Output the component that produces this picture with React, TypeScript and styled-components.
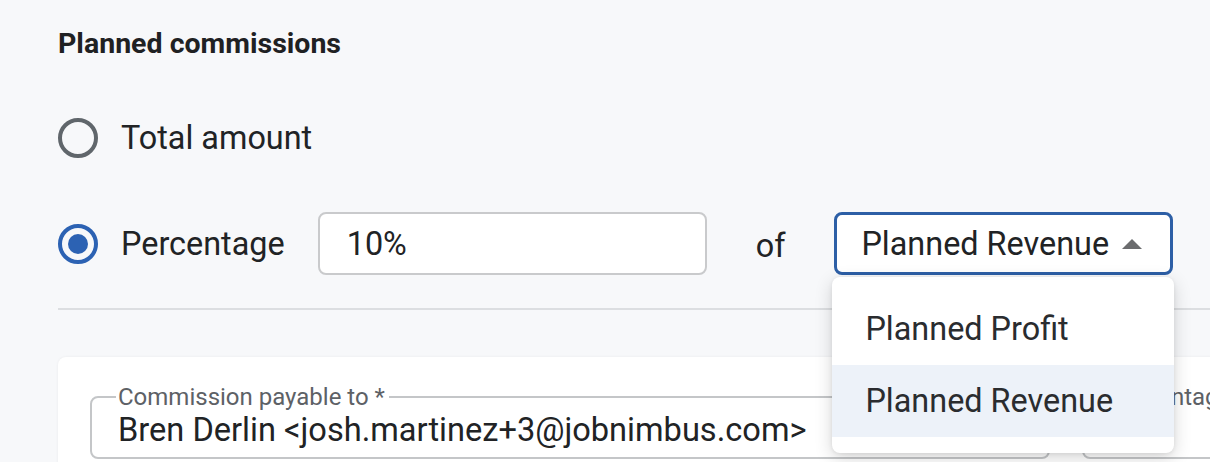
import React, { useState } from "react";
import styled, { createGlobalStyle } from "styled-components";

const GlobalStyle = createGlobalStyle`
  body {
    margin: 0;
    background: #f7f8fa;
    overflow: hidden;
    font-family: Roboto, "Liberation Sans", sans-serif;
    color: #212325;
  }
`;

const Page = styled.div`
  width: 1400px;
  padding: 27px 0 0 58px;
`;

const Heading = styled.h2`
  margin: 0;
  font-size: 28.5px;
  line-height: 34px;
  font-weight: 700;
  color: #1f2123;
`;

const RadioGroup = styled.div`
  display: flex;
  flex-direction: column;
  gap: 43px;
  margin-top: 45px;
`;

const Row = styled.div`
  display: flex;
  align-items: center;
  height: 63px;
`;

const RadioCircle = styled.span<{ $checked?: boolean }>`
  box-sizing: border-box;
  width: 40px;
  height: 40px;
  border-radius: 50%;
  border: 4px solid ${(p) => (p.$checked ? "#2c62b3" : "#60666b")};
  display: flex;
  align-items: center;
  justify-content: center;
  flex-shrink: 0;

  &::after {
    content: "";
    display: ${(p) => (p.$checked ? "block" : "none")};
    width: 20px;
    height: 20px;
    border-radius: 50%;
    background: #2c62b3;
  }
`;

const RadioLabel = styled.span`
  margin-left: 23px;
  font-size: 32.4px;
  line-height: 40px;
`;

const TextInput = styled.div`
  box-sizing: border-box;
  margin-left: 33px;
  width: 389px;
  height: 63px;
  border: 2px solid #c9cacc;
  border-radius: 8px;
  background: #fff;
  padding-left: 27px;
  display: flex;
  align-items: center;
  font-size: 32.4px;
`;

const Of = styled.span`
  margin: 4px 49px 0 49px;
  font-size: 32.4px;
`;

const SelectWrap = styled.div`
  position: relative;
`;

const SelectBox = styled.div`
  box-sizing: border-box;
  width: 339px;
  height: 63px;
  border: 3px solid #2d5fa6;
  border-radius: 8px;
  background: #fff;
  padding: 0 28px 0 24px;
  display: flex;
  align-items: center;
  justify-content: space-between;
  font-size: 32.4px;
`;

const Caret = styled.span`
  width: 0;
  height: 0;
  border-left: 10px solid transparent;
  border-right: 10px solid transparent;
  border-bottom: 10px solid #6b6c6e;
`;

const Menu = styled.ul`
  position: absolute;
  z-index: 5;
  top: calc(100% + 2px);
  left: -2px;
  width: 342px;
  margin: 0;
  padding: 16px 0;
  list-style: none;
  background: #fff;
  border-radius: 8px;
  box-shadow: 0 5px 18px rgba(0, 0, 0, 0.16), 0 1px 4px rgba(0, 0, 0, 0.08);
`;

const MenuItem = styled.li<{ $selected?: boolean }>`
  height: 72px;
  line-height: 72px;
  padding-left: 33px;
  font-size: 32.4px;
  color: #2a2c2f;
  background: ${(p) => (p.$selected ? "#edf2f9" : "transparent")};
`;

const Divider = styled.hr`
  margin: 33px 0 0;
  border: none;
  height: 2px;
  background: #dcdee1;
`;

const Card = styled.div`
  margin-top: 47px;
  background: #fff;
  border-radius: 8px;
  box-shadow: 0 0 3px rgba(0, 0, 0, 0.06);
  padding: 28px 32px 40px;
  display: flex;
  gap: 32px;
`;

const Field = styled.fieldset<{ $width: number }>`
  box-sizing: border-box;
  flex-shrink: 0;
  width: ${(p) => p.$width}px;
  margin: 0;
  padding: 0 22px 6px 24px;
  border: 2px solid #c4c6c8;
  border-radius: 8px;
`;

const Legend = styled.legend`
  padding: 0 4px 0 2px;
  font-size: 24px;
  line-height: 24px;
  color: #5d6166;
`;

const FieldValue = styled.div`
  padding-left: 2px;
  font-size: 32.6px;
  line-height: 42px;
  color: #212325;
  white-space: nowrap;
`;

export default function App() {
  const [basis, setBasis] = useState("Planned Revenue");
  const options = ["Planned Profit", "Planned Revenue"];

  return (
    <>
      <GlobalStyle />
      <Page>
        <Heading>Planned commissions</Heading>
        <RadioGroup>
          <Row>
            <RadioCircle />
            <RadioLabel>Total amount</RadioLabel>
          </Row>
          <Row>
            <RadioCircle $checked />
            <RadioLabel>Percentage</RadioLabel>
            <TextInput>10%</TextInput>
            <Of>of</Of>
            <SelectWrap>
              <SelectBox>
                {basis}
                <Caret />
              </SelectBox>
              <Menu>
                {options.map((o) => (
                  <MenuItem key={o} $selected={o === basis} onClick={() => setBasis(o)}>
                    {o}
                  </MenuItem>
                ))}
              </Menu>
            </SelectWrap>
          </Row>
        </RadioGroup>
        <Divider />
        <Card>
          <Field $width={960}>
            <Legend>Commission payable to *</Legend>
            <FieldValue>Bren Derlin &lt;josh.martinez+3@jobnimbus.com&gt;</FieldValue>
          </Field>
          <Field $width={400}>
            <Legend>Percentage *</Legend>
            <FieldValue />
          </Field>
        </Card>
      </Page>
    </>
  );
}
